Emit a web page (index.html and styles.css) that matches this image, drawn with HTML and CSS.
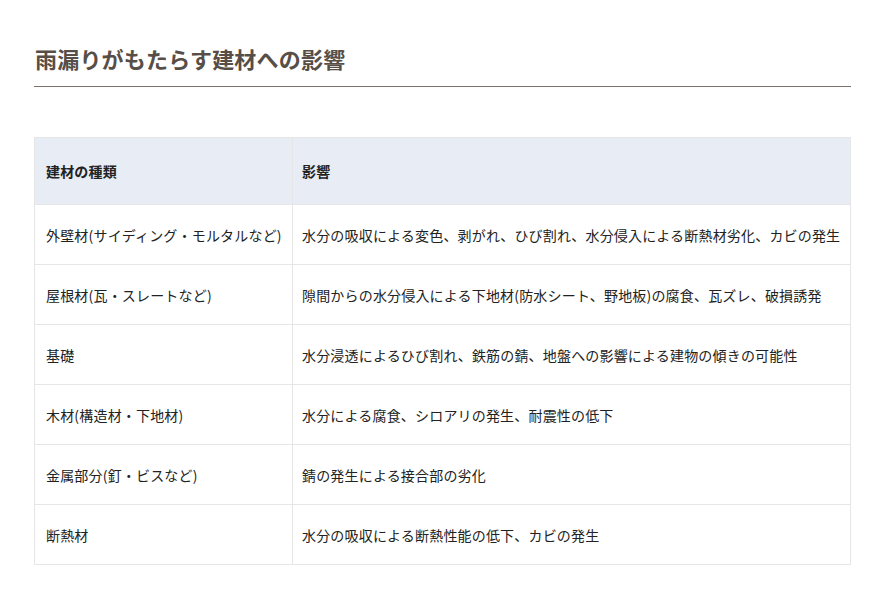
FILE: index.html
```html
<!DOCTYPE html>
<html lang="ja">
<head>
<meta charset="utf-8">
<link rel="stylesheet" href="styles.css">
</head>
<body>
<div class="wrap">
  <h2 class="title">雨漏りがもたらす建材への影響</h2>
  <table class="tbl">
    <thead>
      <tr><th class="c1">建材の種類</th><th>影響</th></tr>
    </thead>
    <tbody>
      <tr><td>外壁材(サイディング・モルタルなど)</td><td>水分の吸収による変色、剥がれ、ひび割れ、水分侵入による断熱材劣化、カビの発生</td></tr>
      <tr><td>屋根材(瓦・スレートなど)</td><td>隙間からの水分侵入による下地材(防水シート、野地板)の腐食、瓦ズレ、破損誘発</td></tr>
      <tr><td>基礎</td><td>水分浸透によるひび割れ、鉄筋の錆、地盤への影響による建物の傾きの可能性</td></tr>
      <tr><td>木材(構造材・下地材)</td><td>水分による腐食、シロアリの発生、耐震性の低下</td></tr>
      <tr><td>金属部分(釘・ビスなど)</td><td>錆の発生による接合部の劣化</td></tr>
      <tr><td>断熱材</td><td>水分の吸収による断熱性能の低下、カビの発生</td></tr>
    </tbody>
  </table>
</div>
</body>
</html>
```
FILE: styles.css
```css
html, body {
  margin: 0;
  padding: 0;
  background: #fff;
}
body {
  font-family: "Noto Sans CJK JP", "Noto Sans", sans-serif;
  color: #333;
}
.wrap {
  width: 817px;
  margin-left: 34px;
  padding-top: 42px;
}
.title {
  margin: 0;
  font-size: 22px;
  font-weight: 700;
  line-height: 32px;
  letter-spacing: 0.2px;
  color: #574e47;
  padding: 0 0 12px 1px;
  border-bottom: 1px solid #7a726b;
}
.tbl {
  width: 817px;
  margin-top: 50px;
  border-collapse: collapse;
  table-layout: fixed;
  font-size: 14px;
  letter-spacing: 0.18px;
}
.tbl th, .tbl td {
  border: 1px solid #e6e6e6;
  text-align: left;
  padding: 0 0 0 11px;
  vertical-align: middle;
  white-space: nowrap;
  line-height: 20px;
}
.tbl th {
  background: #e8edf5;
  font-weight: 700;
  height: 66px;
  color: #222;
}
.tbl td {
  height: 59px;
  color: #222;
}
.tbl td + td, .tbl th + th {
  padding-left: 9px;
}
.tbl .c1 {
  width: 246px;
}
```
